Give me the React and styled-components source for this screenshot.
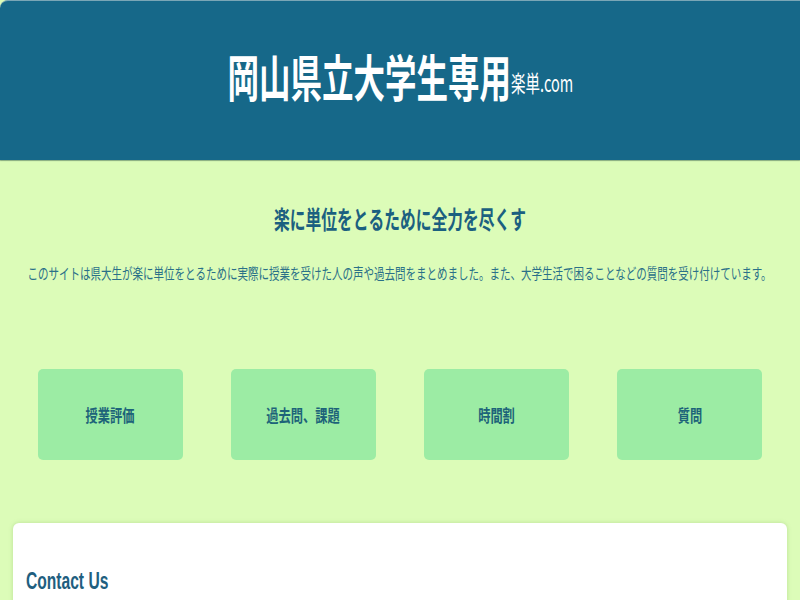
import React from "react";
import styled, { createGlobalStyle } from "styled-components";

const GlobalStyle = createGlobalStyle`
	html, body {
		margin: 0;
		padding: 0;
		background: #dcfcb8;
		overflow-x: hidden;
	}
	body {
		font-family: "Noto Sans CJK JP", "Liberation Sans", sans-serif;
	}
`;

const Page = styled.div`
	min-height: 600px;
	overflow: hidden;
`;

const Header = styled.header`
	height: 160px;
	box-sizing: border-box;
	padding-bottom: 12px;
	background: #166889;
	border-top: 1px solid #7aa6b6;
	border-radius: 8px 0 0 0;
	box-shadow: 0 1px 1px rgba(30, 70, 60, 0.45);
	display: flex;
	align-items: center;
	justify-content: center;
`;

// テキストは横に詰まって見えるので scaleX で合わせる
const Squeeze = styled.span`
	display: inline-block;
	white-space: nowrap;
	transform: scaleX(${(p) => p.$sx});
	transform-origin: ${(p) => (p.$left ? "left center" : "center")};
`;

const Title = styled.h1`
	margin: 0;
	color: #ffffff;
	font-size: 50px;
	font-weight: 700;
	line-height: 1;
`;

const SiteName = styled.small`
	font-size: 23px;
	font-weight: 400;
	line-height: 1;
	vertical-align: 5px;
`;

const Main = styled.main`
	display: flex;
	flex-direction: column;
`;

const Center = styled.div`
	display: flex;
	justify-content: center;
	margin-top: ${(p) => p.$mt}px;
`;

const Lead = styled.h2`
	margin: 0;
	color: #1b6080;
	font-size: 25px;
	font-weight: 700;
	line-height: 1;
`;

const Intro = styled.p`
	margin: 0;
	color: #2a7088;
	font-size: 15px;
	line-height: 1;
`;

const Menu = styled.nav`
	display: grid;
	grid-template-columns: repeat(4, 1fr);
	column-gap: 48.5px;
	padding: 0 38px;
	margin-top: 89px;
`;

const MenuCard = styled.a`
	height: 91px;
	border-radius: 5px;
	background: #9ceca4;
	display: flex;
	align-items: center;
	justify-content: center;
	color: #1d6379;
	font-size: 17px;
	font-weight: 700;
	text-decoration: none;
	line-height: 1;
`;

const Contact = styled.section`
	margin: 63px 13px 0;
	min-height: 120px;
	padding: 43px 13px 20px;
	background: #ffffff;
	border-radius: 6px;
	box-shadow: 0 0 4px rgba(120, 170, 90, 0.35);
`;

const ContactTitle = styled.h3`
	margin: 0;
	color: #1f5f80;
	font-family: "Liberation Sans", Arial, sans-serif;
	font-size: 24px;
	font-weight: 700;
	line-height: 29px;
`;

const menu = ["授業評価", "過去問、課題", "時間割", "質問"];

const App = () => {
	return (
		<Page>
			<GlobalStyle />
			<Header>
				<Title>
					<Squeeze $sx={0.63}>
						岡山県立大学生専用<SiteName>楽単.com</SiteName>
					</Squeeze>
				</Title>
			</Header>
			<Main>
				<Center $mt={46}>
					<Lead>
						<Squeeze $sx={0.63}>楽に単位をとるために全力を尽くす</Squeeze>
					</Lead>
				</Center>
				<Center $mt={34}>
					<Intro>
						<Squeeze $sx={0.7}>
							このサイトは県大生が楽に単位をとるために実際に授業を受けた人の声や過去問をまとめました。また、大学生活で困ることなどの質問を受け付けています。
						</Squeeze>
					</Intro>
				</Center>
				<Menu>
					{menu.map((m) => (
						<MenuCard key={m} href="#">
							<Squeeze $sx={0.72}>{m}</Squeeze>
						</MenuCard>
					))}
				</Menu>
				<Contact>
					<ContactTitle>
						<Squeeze $sx={0.65} $left>
							Contact Us
						</Squeeze>
					</ContactTitle>
				</Contact>
			</Main>
		</Page>
	);
};

export default App;
